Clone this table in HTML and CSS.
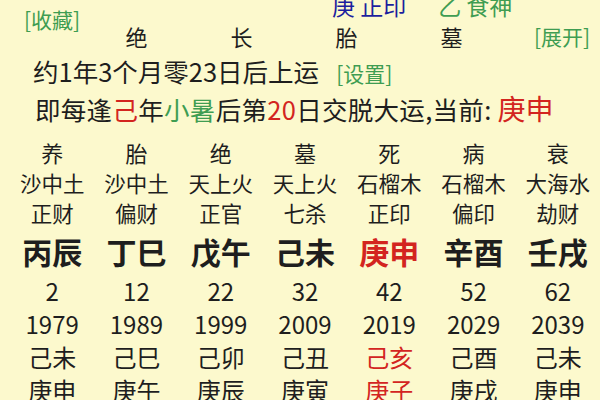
FILE: index.html
```html
<!DOCTYPE html>
<html lang="zh">
<head>
<meta charset="utf-8">
<link rel="stylesheet" href="styles.css">
</head>
<body>
<div class="page">
  <div class="hdr1">
    <span class="fav green">[收藏]</span>
    <div class="tg">
      <span class="blue">庚 正印</span>
      <span class="green tg2">乙 食神</span>
    </div>
  </div>
  <div class="hdr2">
    <span>绝</span><span>长</span><span>胎</span><span>墓</span><span class="more green">[展开]</span>
  </div>
  <div class="line l1">约1年3个月零23日后上运<span class="set green">[设置]</span></div>
  <div class="line l2">即每逢<span class="red">己</span>年<span class="green">小暑</span>后第<span class="red">20</span>日交脱大运,当前: <span class="cur red">庚申</span></div>

  <div class="grid">
    <div class="r r1">养</div><div class="r r1">胎</div><div class="r r1">绝</div><div class="r r1">墓</div><div class="r r1">死</div><div class="r r1">病</div><div class="r r1">衰</div>
    <div class="r r2">沙中土</div><div class="r r2">沙中土</div><div class="r r2">天上火</div><div class="r r2">天上火</div><div class="r r2">石榴木</div><div class="r r2">石榴木</div><div class="r r2">大海水</div>
    <div class="r r3">正财</div><div class="r r3">偏财</div><div class="r r3">正官</div><div class="r r3">七杀</div><div class="r r3">正印</div><div class="r r3">偏印</div><div class="r r3">劫财</div>
    <div class="r gz">丙辰</div><div class="r gz">丁巳</div><div class="r gz">戊午</div><div class="r gz">己未</div><div class="r gz red">庚申</div><div class="r gz">辛酉</div><div class="r gz">壬戌</div>
    <div class="r lo">2</div><div class="r lo">12</div><div class="r lo">22</div><div class="r lo">32</div><div class="r lo">42</div><div class="r lo">52</div><div class="r lo">62</div>
    <div class="r lo">1979</div><div class="r lo">1989</div><div class="r lo">1999</div><div class="r lo">2009</div><div class="r lo">2019</div><div class="r lo">2029</div><div class="r lo">2039</div>
    <div class="r lo">己未</div><div class="r lo">己巳</div><div class="r lo">己卯</div><div class="r lo">己丑</div><div class="r lo red">己亥</div><div class="r lo">己酉</div><div class="r lo">己未</div>
    <div class="r lo">庚申</div><div class="r lo">庚午</div><div class="r lo">庚辰</div><div class="r lo">庚寅</div><div class="r lo red">庚子</div><div class="r lo">庚戌</div><div class="r lo">庚申</div>
  </div>
</div>
</body>
</html>
```

FILE: styles.css
```css
html, body {
  margin: 0;
  padding: 0;
  background: #fcf9cd;
}
body {
  width: 600px;
  height: 400px;
  overflow: hidden;
  font-family: "Noto Sans CJK SC", "Noto Sans", sans-serif;
  color: #1e1e1e;
}
.green { color: #3f9d52; }
.blue { color: #1d1f9e; }
.red { color: #d3251f; }

.hdr1 {
  display: flex;
  align-items: flex-start;
  height: 23px;
}
.fav {
  width: 308px;
  margin-left: 24px;
  margin-top: 6px;
  font-size: 21px;
  line-height: 26px;
}
.tg {
  margin-top: -8px;
  font-size: 23px;
  line-height: 26px;
  display: flex;
}
.tg2 { margin-left: 32px; }

.hdr2 {
  display: grid;
  grid-template-columns: repeat(5, 105px);
  padding-left: 84px;
  font-size: 22px;
  line-height: 26px;
}
.hdr2 span { text-align: center; }
.hdr2 .more {
  text-align: left;
  padding-left: 30px;
  font-size: 21px;
}

.line {
  padding-left: 33px;
  font-size: 25.5px;
  line-height: 35px;
  white-space: nowrap;
}
.l1 { margin-top: 4px; }
.l2 { padding-left: 35px; letter-spacing: 0.3px; }
.set { font-size: 21px; margin-left: 17px; letter-spacing: 0; }
.cur { font-size: 28px; letter-spacing: 0; }

.grid {
  margin-top: 11px;
  margin-left: 10px;
  width: 590px;
  display: grid;
  grid-template-columns: repeat(7, 1fr);
}
.r {
  text-align: center;
  white-space: nowrap;
}
.r1 { font-size: 22px; line-height: 31px; }
.r2 { font-size: 21.5px; line-height: 30px; }
.r3 { font-size: 21.5px; line-height: 30px; }
.gz { font-size: 30px; font-weight: bold; line-height: 46px; }
.lo { font-size: 24px; line-height: 33px; }
```
